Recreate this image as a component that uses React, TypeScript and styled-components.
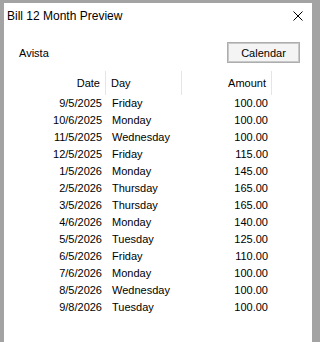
import React from "react";
import styled, { createGlobalStyle } from "styled-components";

const Global = createGlobalStyle`
  html, body { margin: 0; padding: 0; background: #a3a3a3; overflow: hidden; }
  body { font-family: "Liberation Sans", Arial, sans-serif; color: #000; }
`;

const Window = styled.div`
  margin: 3px 0 0 4px;
  width: 308px;
  height: 339px;
  background: #fff;
  display: flex;
  flex-direction: column;
`;

const TitleBar = styled.div`
  height: 26px;
  display: flex;
  align-items: center;
  justify-content: space-between;
  padding: 0 9px 0 3px;
`;

const Title = styled.div`
  font-size: 12px;
  line-height: 14px;
`;

const CloseIcon = styled.svg`
  width: 10px;
  height: 10px;
  display: block;
`;

const Body = styled.div`
  padding: 13px 12px 0 15px;
  display: flex;
  flex-direction: column;
`;

const TopRow = styled.div`
  height: 21px;
  display: flex;
  align-items: center;
  justify-content: space-between;
`;

const Label = styled.div`
  font-size: 11px;
  line-height: 13px;
  padding-top: 2px;
`;

const Button = styled.button`
  width: 73px;
  height: 21px;
  border: 1px solid #adadad;
  box-shadow: inset 0 0 0 1px #c8c8c8;
  background: #f4f4f4;
  font-family: "Liberation Sans", Arial, sans-serif;
  font-size: 11px;
  color: #000;
  padding: 0;
`;

const List = styled.div`
  margin-top: 8px;
  display: grid;
  grid-template-columns: 87px 76px 90px;
`;

const HeadCell = styled.div<{ $align: "left" | "right" }>`
  height: 24px;
  border-right: 1px solid #e5e5e5;
  display: flex;
  align-items: center;
  justify-content: ${(p) => (p.$align === "right" ? "flex-end" : "flex-start")};
  padding: ${(p) => (p.$align === "right" ? "0 5px 0 0" : "0 0 0 5px")};
  font-size: 11px;
  line-height: 13px;
`;

const Cell = styled.div<{ $align: "left" | "right" }>`
  height: 17px;
  display: flex;
  align-items: center;
  justify-content: ${(p) => (p.$align === "right" ? "flex-end" : "flex-start")};
  padding: ${(p) => (p.$align === "right" ? "0 4px 0 0" : "0 0 0 6px")};
  font-size: 11px;
  line-height: 13px;
`;

const rows: [string, string, string][] = [
  ["9/5/2025", "Friday", "100.00"],
  ["10/6/2025", "Monday", "100.00"],
  ["11/5/2025", "Wednesday", "100.00"],
  ["12/5/2025", "Friday", "115.00"],
  ["1/5/2026", "Monday", "145.00"],
  ["2/5/2026", "Thursday", "165.00"],
  ["3/5/2026", "Thursday", "165.00"],
  ["4/6/2026", "Monday", "140.00"],
  ["5/5/2026", "Tuesday", "125.00"],
  ["6/5/2026", "Friday", "110.00"],
  ["7/6/2026", "Monday", "100.00"],
  ["8/5/2026", "Wednesday", "100.00"],
  ["9/8/2026", "Tuesday", "100.00"],
];

export default function App() {
  return (
    <>
      <Global />
      <Window>
        <TitleBar>
          <Title>Bill 12 Month Preview</Title>
          <CloseIcon viewBox="0 0 10 10">
            <path d="M0.5 0.5 L9.5 9.5 M9.5 0.5 L0.5 9.5" stroke="#000" strokeWidth="1" fill="none" />
          </CloseIcon>
        </TitleBar>
        <Body>
          <TopRow>
            <Label>Avista</Label>
            <Button>Calendar</Button>
          </TopRow>
          <List>
            <HeadCell $align="right">Date</HeadCell>
            <HeadCell $align="left">Day</HeadCell>
            <HeadCell $align="right">Amount</HeadCell>
            {rows.map(([d, day, amt], i) => (
              <React.Fragment key={i}>
                <Cell $align="right">{d}</Cell>
                <Cell $align="left">{day}</Cell>
                <Cell $align="right">{amt}</Cell>
              </React.Fragment>
            ))}
          </List>
        </Body>
      </Window>
    </>
  );
}
